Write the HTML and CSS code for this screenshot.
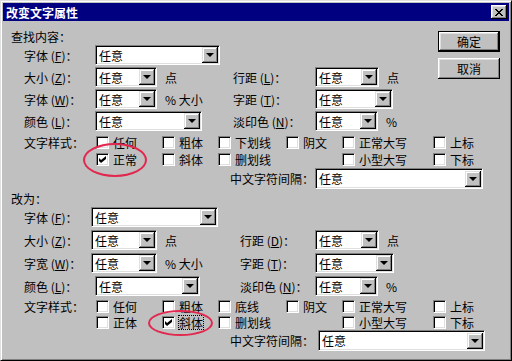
FILE: index.html
```html
<!DOCTYPE html>
<html lang="zh-CN">
<head>
    <meta charset="UTF-8">
    <meta name="viewport" content="width=device-width, initial-scale=1.0">
    <title>改变文字属性</title>
    <link rel="stylesheet" href="styles.css">
</head>
<body>
    <div class="window">
        <div class="titlebar">
            <span class="title">改变文字属性</span>
            <button class="close" aria-label="关闭">
                <svg width="8" height="7" viewBox="0 0 8 7" shape-rendering="crispEdges"><path d="M0 0h2v1h1v1h2v-1h1v-1h2v1h-1v1h-1v1h-1v1h1v1h1v1h1v1h-2v-1h-1v-1h-2v1h-1v1h-2v-1h1v-1h1v-1h1v-1h-1v-1h-1z"/></svg>
            </button>
        </div>

        <div class="content">
            <div class="buttons">
                <button class="btn default">确定</button>
                <button class="btn">取消</button>
            </div>

            <!-- 查找内容 -->
            <div class="group find">
                <div class="group-title">查找内容：</div>
                <div class="row">
                    <span class="lbl">字体 (<u>F</u>)：</span>
                    <div class="cell"><div class="combo" style="width:125px"><span>任意</span><i class="drop"></i></div></div>
                </div>
                <div class="row">
                    <span class="lbl">大小 (<u>Z</u>)：</span>
                    <div class="cell"><div class="combo" style="width:62px"><span>任意</span><i class="drop"></i></div><span class="unit">点</span></div>
                    <span class="lbl right">行距 (<u>L</u>)：</span>
                    <div class="cell"><div class="combo" style="width:64px"><span>任意</span><i class="drop"></i></div><span class="unit">点</span></div>
                </div>
                <div class="row">
                    <span class="lbl">字体 (<u>W</u>)：</span>
                    <div class="cell"><div class="combo" style="width:62px"><span>任意</span><i class="drop"></i></div><span class="unit">% 大小</span></div>
                    <span class="lbl right">字距 (<u>T</u>)：</span>
                    <div class="cell"><div class="combo" style="width:78px"><span>任意</span><i class="drop"></i></div></div>
                </div>
                <div class="row">
                    <span class="lbl">颜色 (<u>L</u>)：</span>
                    <div class="cell"><div class="combo" style="width:107px"><span>任意</span><i class="drop"></i></div></div>
                    <span class="lbl right">淡印色 (<u>N</u>)：</span>
                    <div class="cell"><div class="combo" style="width:63px"><span>任意</span><i class="drop"></i></div><span class="unit">%</span></div>
                </div>
                <div class="checks">
                    <span class="lbl">文字样式：</span>
                    <label class="check"><i class="box"></i>任何</label>
                    <label class="check"><i class="box"></i>粗体</label>
                    <label class="check"><i class="box"></i>下划线</label>
                    <label class="check"><i class="box"></i>阴文</label>
                    <label class="check"><i class="box"></i>正常大写</label>
                    <label class="check"><i class="box"></i>上标</label>
                </div>
                <div class="checks">
                    <span class="lbl"></span>
                    <label class="check"><i class="box checked"></i>正常<span class="ring ring-a"></span></label>
                    <label class="check"><i class="box"></i>斜体</label>
                    <label class="check"><i class="box"></i>删划线</label>
                    <span></span>
                    <label class="check"><i class="box"></i>小型大写</label>
                    <label class="check"><i class="box"></i>下标</label>
                </div>
                <div class="spacing">
                    <span class="lbl">中文字符间隔：</span>
                    <div class="combo" style="width:168px"><span>任意</span><i class="drop"></i></div>
                </div>
            </div>

            <!-- 改为 -->
            <div class="group replace">
                <div class="group-title">改为：</div>
                <div class="row">
                    <span class="lbl">字体 (<u>F</u>)：</span>
                    <div class="cell"><div class="combo" style="width:127px"><span>任意</span><i class="drop"></i></div></div>
                </div>
                <div class="row">
                    <span class="lbl">大小 (<u>Z</u>)：</span>
                    <div class="cell"><div class="combo" style="width:66px"><span>任意</span><i class="drop"></i></div><span class="unit">点</span></div>
                    <span class="lbl right">行距 (<u>D</u>)：</span>
                    <div class="cell"><div class="combo" style="width:64px"><span>任意</span><i class="drop"></i></div><span class="unit">点</span></div>
                </div>
                <div class="row">
                    <span class="lbl">字宽 (<u>W</u>)：</span>
                    <div class="cell"><div class="combo" style="width:66px"><span>任意</span><i class="drop"></i></div><span class="unit">% 大小</span></div>
                    <span class="lbl right">字距 (<u>T</u>)：</span>
                    <div class="cell"><div class="combo" style="width:79px"><span>任意</span><i class="drop"></i></div></div>
                </div>
                <div class="row">
                    <span class="lbl">颜色 (<u>L</u>)：</span>
                    <div class="cell shift"><div class="combo" style="width:105px"><span>任意</span><i class="drop"></i></div></div>
                    <span class="lbl right">淡印色 (<u>N</u>)：</span>
                    <div class="cell"><div class="combo" style="width:63px"><span>任意</span><i class="drop"></i></div><span class="unit">%</span></div>
                </div>
                <div class="checks">
                    <span class="lbl">文字样式：</span>
                    <label class="check"><i class="box"></i>任何</label>
                    <label class="check"><i class="box"></i>粗体</label>
                    <label class="check"><i class="box"></i>底线</label>
                    <label class="check"><i class="box"></i>阴文</label>
                    <label class="check"><i class="box"></i>正常大写</label>
                    <label class="check"><i class="box"></i>上标</label>
                </div>
                <div class="checks">
                    <span class="lbl"></span>
                    <label class="check"><i class="box"></i>正体</label>
                    <label class="check"><i class="box checked"></i><span class="focus">斜体</span><span class="ring ring-b"></span></label>
                    <label class="check"><i class="box"></i>删划线</label>
                    <span></span>
                    <label class="check"><i class="box"></i>小型大写</label>
                    <label class="check"><i class="box"></i>下标</label>
                </div>
                <div class="spacing">
                    <span class="lbl">中文字符间隔：</span>
                    <div class="combo" style="width:167px"><span>任意</span><i class="drop"></i></div>
                </div>
            </div>
        </div>
    </div>
</body>
</html>
```

FILE: styles.css
```css
* {
    box-sizing: border-box;
}

html, body {
    margin: 0;
    padding: 0;
    background: #c0c0c0;
}

body {
    font-family: "Noto Sans CJK SC", "Noto Sans", sans-serif;
    font-size: 12px;
    line-height: 13px;
    color: #000;
}

/* window frame */
.window {
    width: 512px;
    height: 361px;
    background: #c0c0c0;
    border: 1px solid;
    border-color: #dfdfdf #000 #000 #dfdfdf;
    box-shadow: inset 1px 1px #fff, inset -1px -1px #808080;
    padding: 2px;
}

.titlebar {
    height: 18px;
    background: #000080;
    display: flex;
    align-items: center;
    justify-content: space-between;
    padding: 0 2px;
}

.title {
    color: #fff;
    font-weight: bold;
    padding-left: 1px;
}

.close {
    width: 16px;
    height: 14px;
    padding: 0;
    border: none;
    background: #c0c0c0;
    box-shadow: inset -1px -1px #000, inset 1px 1px #fff, inset -2px -2px #808080, inset 2px 2px #dfdfdf;
    display: flex;
    align-items: center;
    justify-content: center;
}

.close svg {
    display: block;
    margin-left: -1px;
}

.content {
    padding: 9px 9px 0 8px;
}

/* OK / Cancel */
.buttons {
    float: right;
    margin-top: 1px;
    display: flex;
    flex-direction: column;
    gap: 6px;
}

.btn {
    width: 62px;
    height: 21px;
    padding: 0;
    border: none;
    background: #c0c0c0;
    font: inherit;
    color: #000;
    box-shadow: inset -1px -1px #000, inset 1px 1px #fff, inset -2px -2px #808080, inset 2px 2px #dfdfdf;
}

.btn.default {
    border: 1px solid #000;
}

/* groups */
.group.replace {
    padding-top: 3px;
}

.group-title {
    height: 13px;
}

.row {
    display: grid;
    grid-template-columns: 84px 138px 82px auto;
    align-items: center;
    height: 20px;
    margin-top: 2px;
}

.replace .row {
    grid-template-columns: 80px 149px 75px auto;
}

.replace .row + .row {
    margin-top: 3px;
}

.lbl {
    padding-left: 13px;
    white-space: nowrap;
}

.lbl.right {
    padding-left: 0;
}

.cell {
    display: flex;
    align-items: center;
    gap: 8px;
}

.cell.shift {
    margin-left: 4px;
}

.unit {
    white-space: nowrap;
}

/* combo box */
.combo {
    flex-shrink: 0;
    height: 20px;
    display: flex;
    align-items: center;
    justify-content: space-between;
    background: #fff;
    border: 1px solid;
    border-color: #808080 #fff #fff #808080;
    box-shadow: inset 1px 1px #000, inset -1px -1px #dfdfdf;
    padding: 2px 2px 2px 3px;
}

.drop {
    width: 16px;
    height: 16px;
    background: #c0c0c0;
    box-shadow: inset -1px -1px #000, inset 1px 1px #dfdfdf, inset -2px -2px #808080, inset 2px 2px #fff;
    display: flex;
    align-items: center;
    justify-content: center;
    margin-right: -1px;
}

.drop::after {
    content: "";
    width: 0;
    height: 0;
    border-left: 4px solid transparent;
    border-right: 4px solid transparent;
    border-top: 4px solid #000;
    margin-left: -1px;
}

/* check boxes */
.checks {
    display: grid;
    grid-template-columns: 84px 66px 56px 68px 56px 91px auto;
    align-items: center;
    height: 15px;
    margin-top: 4px;
}

.checks + .checks {
    margin-top: 2px;
}

.replace .checks {
    margin-top: 3px;
}

.replace .checks + .checks {
    margin-top: 1px;
}

.check {
    position: relative;
    display: flex;
    align-items: center;
    gap: 4px;
    white-space: nowrap;
}

.box {
    width: 13px;
    height: 13px;
    margin-left: 1px;
    background: #fff;
    border: 1px solid;
    border-color: #808080 #fff #fff #808080;
    box-shadow: inset 1px 1px #000, inset -1px -1px #dfdfdf;
    display: flex;
    align-items: center;
    justify-content: center;
}

.box.checked::after {
    content: "";
    width: 7px;
    height: 7px;
    background: #000;
    clip-path: polygon(0 29%, 29% 57%, 100% 0, 100% 43%, 29% 100%, 0 71%);
}

.focus {
    outline: 1px dotted #000;
}

/* red annotation rings */
.ring {
    position: absolute;
    border: 2px solid #e2284f;
    border-radius: 50%;
    pointer-events: none;
}

.ring-a {
    left: -12px;
    top: -10px;
    width: 64px;
    height: 34px;
}

.ring-b {
    left: -13px;
    top: -6px;
    width: 65px;
    height: 26px;
}

/* 中文字符间隔 */
.spacing {
    display: flex;
    align-items: center;
    height: 21px;
    margin-top: 1px;
    padding-left: 219px;
}

.replace .spacing {
    margin-top: 0;
}

.spacing .lbl {
    padding-left: 0;
    width: 85px;
}

.replace .spacing .lbl {
    width: 88px;
}

.spacing .combo {
    height: 21px;
}
```
